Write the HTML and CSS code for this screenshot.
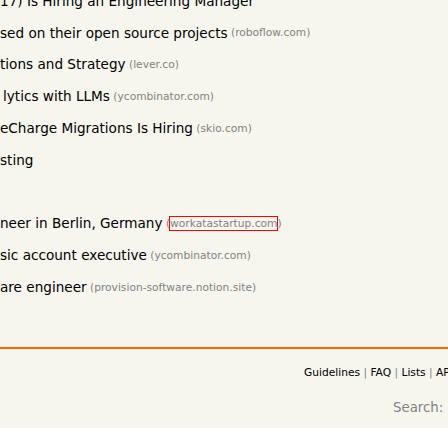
FILE: index.html
```html
<!DOCTYPE html>
<html>
<head>
<meta charset="utf-8">
<title>Jobs</title>
<link rel="stylesheet" href="styles.css">
</head>
<body>
<div class="page">
  <div class="jobs">
    <div class="job"><a class="title">17) Is Hiring an Engineering Manager</a></div>
    <div class="job"><a class="title">sed on their open source projects</a><span class="sitebit"> (<span class="sitestr">roboflow.com</span>)</span></div>
    <div class="job"><a class="title">tions and Strategy</a><span class="sitebit"> (<span class="sitestr">lever.co</span>)</span></div>
    <div class="job"><a class="title shift">lytics with LLMs</a><span class="sitebit"> (<span class="sitestr">ycombinator.com</span>)</span></div>
    <div class="job"><a class="title">eCharge Migrations Is Hiring</a><span class="sitebit"> (<span class="sitestr">skio.com</span>)</span></div>
    <div class="job"><a class="title">sting</a></div>
    <div class="job"></div>
    <div class="job"><a class="title">neer in Berlin, Germany</a><span class="sitebit"> (<span class="sitestr boxed">workatastartup.com</span>)</span></div>
    <div class="job"><a class="title">sic account executive</a><span class="sitebit"> (<span class="sitestr">ycombinator.com</span>)</span></div>
    <div class="job"><a class="title">are engineer</a><span class="sitebit"> (<span class="sitestr">provision-software.notion.site</span>)</span></div>
  </div>
  <div class="footer">
    <div class="rule"></div>
    <div class="yclinks"><a>Guidelines</a> | <a>FAQ</a> | <a>Lists</a> | <a>API</a> | <a>Security</a> | <a>Legal</a> | <a>Apply to YC</a> | <a>Contact</a></div>
    <form class="search">Search: <input type="text" size="17"></form>
  </div>
</div>
</body>
</html>
```
FILE: styles.css
```css
html, body {
  margin: 0;
  padding: 0;
  background: #ffffff;
}
body {
  font-family: "DejaVu Sans", Verdana, sans-serif;
  overflow: hidden;
}
.page {
  background: #f6f6ef;
  overflow: hidden;
}
.jobs {
  margin-top: -15px;
}
.job {
  height: 31.8px;
  display: flex;
  align-items: center;
  white-space: nowrap;
}
.title {
  font-size: 13.6px;
  color: #000000;
}
.shift {
  margin-left: 3px;
}
.sitebit {
  font-size: 10.67px;
  color: #828282;
  white-space: pre;
}
.boxed {
  outline: 1px solid #ff0000;
}
.footer {
  padding-top: 44px;
  padding-bottom: 10px;
}
.rule {
  height: 2px;
  background: #ff6600;
}
.yclinks {
  font-size: 10.67px;
  color: #828282;
  white-space: nowrap;
  padding-left: 304px;
  margin-top: 17px;
}
.yclinks a {
  color: #000000;
}
.search {
  margin: 18px 0 0 0;
  padding-left: 393px;
  font-size: 13.33px;
  color: #828282;
  white-space: nowrap;
}
.search input {
  font-size: 13.33px;
  width: 120px;
}
```
